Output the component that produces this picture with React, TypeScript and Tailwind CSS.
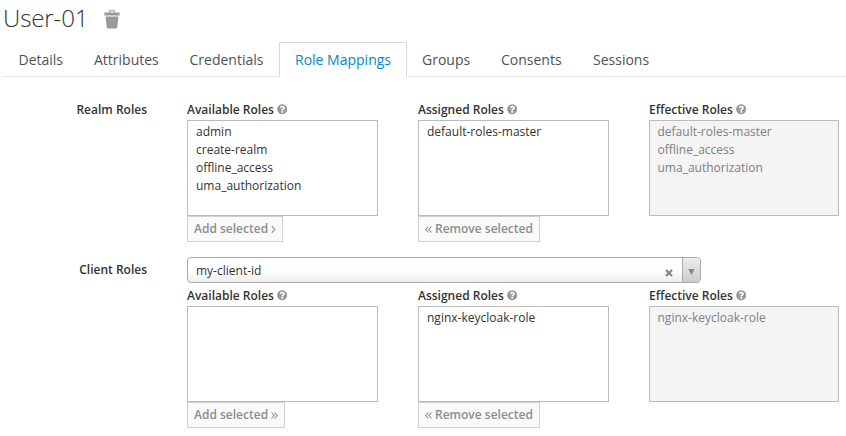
import type { ReactNode } from "react";
import { FaQuestionCircle } from "react-icons/fa";

const tabs = [
  { label: "Details", width: "w-[75px]", pad: "pl-[14.5px]" },
  { label: "Attributes", width: "w-[96px]", pad: "pl-[15px]" },
  { label: "Credentials", width: "w-[105px]", pad: "pl-[14.5px]" },
  { label: "Role Mappings", width: "w-[128px]", pad: "pl-[15px]" },
  { label: "Groups", width: "w-[78px]", pad: "pl-[14px]" },
  { label: "Consents", width: "w-[92px]", pad: "pl-[15px]" },
  { label: "Sessions", width: "w-[88px]", pad: "pl-[15px]" },
];

function TrashIcon() {
  return (
    <svg width="16" height="19" viewBox="0 0 16 19" fill="#999">
      <path d="M5.5 2.9V1.2Q5.5.6 6.1.6h3.8q.6 0 .6.6v1.7" fill="none" stroke="#aaa" strokeWidth="1.2" />
      <path d="M1.1 2.6h13.8q.8 0 .8.8v2H.3v-2q0-.8.8-.8z" />
      <path d="M1.5 6.5h13l-1.2 10.8q-.1 1.1-1.2 1.1H3.9q-1.1 0-1.2-1.1z" />
    </svg>
  );
}

function Chevron({ kind }: { kind: "right" | "doubleLeft" | "doubleRight" }) {
  const paths = {
    right: "M.8 1.2L3.8 4.5.8 7.8",
    doubleLeft: "M3.5 1.5L.8 4.5l2.7 3M6.5 1.5L3.8 4.5l2.7 3",
    doubleRight: "M.5 1.5l2.7 3-2.7 3M3.5 1.5l2.7 3-2.7 3",
  };
  const width = kind === "right" ? 5 : 7;
  return (
    <svg className="shrink-0" width={width} height="9" viewBox={`0 0 ${width} 9`} fill="none" stroke="#8b8d8f" strokeWidth="1.1">
      <path d={paths[kind]} />
    </svg>
  );
}

function RoleColumn({ title, roles, disabled = false, children }: {
  title: string;
  roles: string[];
  disabled?: boolean;
  children?: ReactNode;
}) {
  return (
    <div className={`flex flex-col items-start ${disabled ? "w-[190px]" : "w-[191px]"}`}>
      <div className="flex h-[21px] items-center gap-[3px] font-semibold">
        <span>{title}</span>
        <FaQuestionCircle size={10.5} color="#999" />
      </div>
      <ul className={`h-24 w-full border border-[#bbb] py-[2px] leading-[18px] ${disabled ? "bg-[#f4f4f4] pl-[7.5px] text-[#808080]" : "bg-white pl-2"}`}>
        {roles.map((role) => <li key={role}>{role}</li>)}
      </ul>
      {children}
    </div>
  );
}

function ActionButton({ width, children }: { width: string; children: ReactNode }) {
  return (
    <button disabled className={`flex h-[26px] items-center gap-[3px] border border-[#d1d1d1] bg-[#fafafa] pl-1.5 font-semibold whitespace-nowrap text-[#8b8d8f] ${width}`}>
      {children}
    </button>
  );
}

export default function App() {
  return (
    <main className="h-[436px] w-[846px] overflow-hidden bg-white font-['Open_Sans',sans-serif] text-xs text-[#333]">
      <header className="flex h-[42px] items-start gap-4 pl-[3px]">
        <h1 className="w-[85px] text-2xl leading-[35px] font-light tracking-[-0.1px] whitespace-nowrap">User-01</h1>
        <div className="pt-2.5"><TrashIcon /></div>
      </header>
      <nav className="ml-[3px] flex h-[35px] border-b border-[#e9e9e9] text-sm text-[#4d5258]">
        {tabs.map(({ label, width, pad }) => (
          <a key={label} className={`flex h-[35px] items-center border whitespace-nowrap ${pad} ${width} ${label === "Role Mappings" ? "border-[#d8d8d8] border-b-white bg-white text-[#0088ce]" : "border-transparent"}`}>
            {label}
          </a>
        ))}
      </nav>
      <section className="flex pt-[22px]">
        <div className="w-[147px] pt-px text-right leading-5 font-semibold">Realm Roles</div>
        <div className="ml-10 flex gap-10">
          <RoleColumn title="Available Roles" roles={["admin", "create-realm", "offline_access", "uma_authorization"]}>
            <ActionButton width="w-24">Add selected <Chevron kind="right" /></ActionButton>
          </RoleColumn>
          <RoleColumn title="Assigned Roles" roles={["default-roles-master"]}>
            <ActionButton width="w-[122px]"><Chevron kind="doubleLeft" /> Remove selected</ActionButton>
          </RoleColumn>
          <RoleColumn title="Effective Roles" roles={["default-roles-master", "offline_access", "uma_authorization"]} disabled />
        </div>
      </section>
      <section className="flex pt-[15px]">
        <div className="w-[147px] pt-[3px] text-right leading-5 font-semibold">Client Roles</div>
        <div className="ml-10">
          <div className="flex h-[26px] w-[514px] overflow-hidden rounded-[4px] border border-[#aaa] bg-linear-to-b from-white from-50% to-[#eee]">
            <span className="flex-1 pl-2 leading-[25px]">my-client-id</span>
            <span className="flex w-[17px] items-center pt-[6px]">
              <svg width="8" height="8" viewBox="0 0 8 8"><path d="M1 1l6 6M7 1L1 7" stroke="#888" strokeWidth="2.3" /></svg>
            </span>
            <span className="flex w-[18px] items-center justify-center border-l border-[#aaa] bg-linear-to-b from-[#eee] to-[#ccc] pt-[3px]">
              <svg width="7" height="6" viewBox="0 0 7 6"><path d="M.3 0h6.4L3.5 6z" fill="#888" /></svg>
            </span>
          </div>
          <div className="flex gap-10 pt-[2px]">
            <RoleColumn title="Available Roles" roles={[]}>
              <ActionButton width="w-[98px]">Add selected <Chevron kind="doubleRight" /></ActionButton>
            </RoleColumn>
            <RoleColumn title="Assigned Roles" roles={["nginx-keycloak-role"]}>
              <ActionButton width="w-[122px]"><Chevron kind="doubleLeft" /> Remove selected</ActionButton>
            </RoleColumn>
            <RoleColumn title="Effective Roles" roles={["nginx-keycloak-role"]} disabled />
          </div>
        </div>
      </section>
    </main>
  );
}
